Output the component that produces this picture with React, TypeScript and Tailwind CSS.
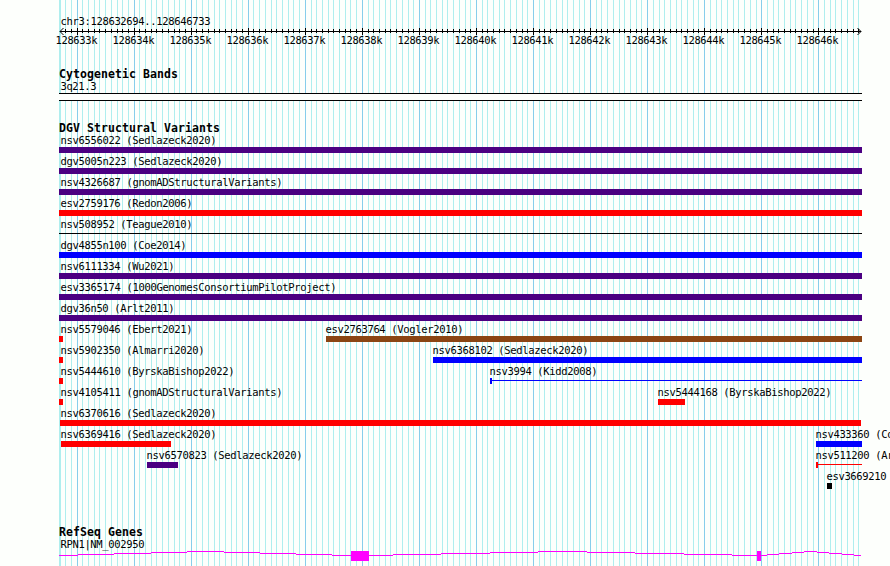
import React from 'react';

const START = 128632694;
const PX_PER_BASE = 0.0570513;
const LEFT = 59.15;

const toX = (base: number) => Math.round(LEFT + (base - START) * PX_PER_BASE);

const TICKS = Array.from({ length: 141 }, (_, i) => {
  const base = 128632700 + i * 100;
  return { x: toX(base), major: base % 1000 === 0, label: `${base / 1000}k` };
});

type Feature = { name: string; x: number; end: number; color: string; kind?: 'bar' | 'line' | 'bracket' };

const PURPLE = '#4b0082';

const ROWS: Feature[][] = [
  [{ name: 'nsv6556022 (Sedlazeck2020)', x: 59, end: 862, color: PURPLE }],
  [{ name: 'dgv5005n223 (Sedlazeck2020)', x: 59, end: 862, color: PURPLE }],
  [{ name: 'nsv4326687 (gnomADStructuralVariants)', x: 59, end: 862, color: PURPLE }],
  [{ name: 'esv2759176 (Redon2006)', x: 59, end: 862, color: '#ff0000' }],
  [{ name: 'nsv508952 (Teague2010)', x: 59, end: 862, color: '#000000', kind: 'line' }],
  [{ name: 'dgv4855n100 (Coe2014)', x: 59, end: 862, color: '#0000ff' }],
  [{ name: 'nsv6111334 (Wu2021)', x: 59, end: 862, color: PURPLE }],
  [{ name: 'esv3365174 (1000GenomesConsortiumPilotProject)', x: 59, end: 862, color: PURPLE }],
  [{ name: 'dgv36n50 (Arlt2011)', x: 59, end: 862, color: PURPLE }],
  [
    { name: 'nsv5579046 (Ebert2021)', x: 59, end: 63, color: '#ff0000' },
    { name: 'esv2763764 (Vogler2010)', x: 326, end: 862, color: '#8b4513' },
  ],
  [
    { name: 'nsv5902350 (Almarri2020)', x: 59, end: 63, color: '#ff0000' },
    { name: 'nsv6368102 (Sedlazeck2020)', x: 433, end: 862, color: '#0000ff' },
  ],
  [
    { name: 'nsv5444610 (ByrskaBishop2022)', x: 59, end: 63, color: '#ff0000' },
    { name: 'nsv3994 (Kidd2008)', x: 490, end: 862, color: '#0000ff', kind: 'bracket' },
  ],
  [
    { name: 'nsv4105411 (gnomADStructuralVariants)', x: 59, end: 63, color: '#ff0000' },
    { name: 'nsv5444168 (ByrskaBishop2022)', x: 658, end: 685, color: '#ff0000' },
  ],
  [{ name: 'nsv6370616 (Sedlazeck2020)', x: 60, end: 861, color: '#ff0000' }],
  [
    { name: 'nsv6369416 (Sedlazeck2020)', x: 61, end: 171, color: '#ff0000' },
    { name: 'nsv433360 (Co', x: 816, end: 862, color: '#0000ff' },
  ],
  [
    { name: 'nsv6570823 (Sedlazeck2020)', x: 147, end: 178, color: PURPLE },
    { name: 'nsv511200 (Ar', x: 816, end: 862, color: '#ff0000', kind: 'bracket' },
  ],
  [{ name: 'esv3669210', x: 827, end: 832, color: '#000000' }],
];

// Every character gets its own fixed cell, like a bitmap font
function Label({ x, y, text, bold = false }: { x: number; y: number; text: string; bold?: boolean }) {
  return (
    <text
      x={x}
      y={y}
      textLength={text.length * (bold ? 7 : 6)}
      lengthAdjust="spacing"
      className={bold ? 'text-[11.5px] font-bold' : 'text-[10.5px]'}
    >
      {text}
    </text>
  );
}

function Grid() {
  return (
    <svg className="absolute inset-0" width="890" height="566" shapeRendering="crispEdges">
      <rect x={59} y={0} width={2} height={566} fill="#afeeee" />
      {TICKS.map((t) => (
        <rect key={t.x} x={t.x} y={0} width={1} height={566} fill={t.major ? '#87ceeb' : '#afeeee'} />
      ))}
    </svg>
  );
}

function Ruler() {
  return (
    <svg className="block" width="890" height="68">
      <g shapeRendering="crispEdges">
        <rect x={60} y={31} width={801} height={1} />
        {TICKS.slice(1).map((t) => (
          <rect key={t.x} x={t.x} y={t.major ? 28 : 29} width={1} height={t.major ? 7 : 4} />
        ))}
      </g>
      <path d="M63.5 28L60 31.5L63.5 35M857.5 28L861 31.5L857.5 35" fill="none" stroke="#000" />
      <Label x={60.5} y={25} text="chr3:128632694..128646733" />
      {TICKS.filter((t) => t.major).map((t) => (
        <Label key={t.label} x={t.x - 21.5} y={44} text={t.label} />
      ))}
    </svg>
  );
}

function Bands() {
  return (
    <svg className="block" width="890" height="54">
      <Label x={59} y={10} text="Cytogenetic Bands" bold />
      <Label x={60.5} y={22} text="3q21.3" />
      <rect x={59} y={25} width={803} height={8} />
      <rect x={59} y={26} width={803} height={6} fill="#fdfffc" />
    </svg>
  );
}

function Shape({ f }: { f: Feature }) {
  const width = f.end - f.x;
  if (f.kind === 'line' || f.kind === 'bracket') {
    return (
      <g fill={f.color}>
        <rect x={f.x} y={14} width={width} height={1} />
        {f.kind === 'bracket' && <rect x={f.x} y={12} width={2} height={6} />}
      </g>
    );
  }
  return <rect x={f.x} y={12} width={width} height={6} fill={f.color} />;
}

function Variants() {
  return (
    <div className="h-[404px]">
      <svg className="block overflow-visible" width="890" height="13">
        <Label x={59} y={10} text="DGV Structural Variants" bold />
      </svg>
      {ROWS.map((row) => (
        <svg key={row[0].name} className="block overflow-visible" width="890" height="21">
          {row.map((f) => (
            <g key={f.name}>
              <Shape f={f} />
              <Label x={Math.max(60.5, f.x - 0.5)} y={9} text={f.name} />
            </g>
          ))}
        </svg>
      ))}
    </div>
  );
}

// [start x, y] of each horizontal run of the intron line
const INTRONS = [
  [59, 555], [78, 554], [114, 553], [151, 552], [187, 551], [224, 552], [260, 553], [296, 554],
  [332, 555], [393, 554], [441, 553], [490, 552], [538, 551], [587, 552], [635, 553],
  [684, 554], [732, 555], [767, 554], [779, 553], [792, 552], [804, 551], [817, 552],
  [829, 553], [842, 554], [854, 555], [861, 555],
];

function Genes() {
  return (
    <svg className="block" width="890" height="40" viewBox="0 526 890 40">
      <Label x={59} y={536} text="RefSeq Genes" bold />
      <Label x={60.5} y={548} text="RPN1|NM_002950" />
      <g fill="#ff00ff">
        {INTRONS.slice(0, -1).map(([x, y], i) => (
          <rect key={x} x={x} y={y} width={INTRONS[i + 1][0] - x} height={1} />
        ))}
        <rect x={351} y={551} width={18} height={10} />
        <rect x={757} y={551} width={4} height={10} />
      </g>
    </svg>
  );
}

export default function App() {
  return (
    <main className="relative h-[566px] w-[890px] overflow-hidden bg-[#fdfffc] font-['DejaVu_Sans_Mono',monospace]">
      <Grid />
      <div className="relative flex flex-col">
        <Ruler />
        <Bands />
        <Variants />
        <Genes />
      </div>
    </main>
  );
}
